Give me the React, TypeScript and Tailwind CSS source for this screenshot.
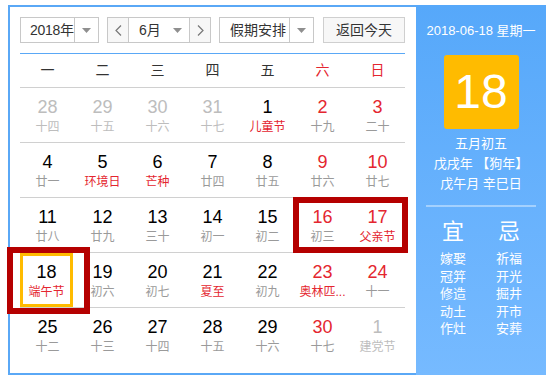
import React from "react";

type Cell = { d: string; l: string; n: "k" | "r" | "g"; lr?: "r" | "g" | "n" };

const rows: Cell[][] = [
  [
    { d: "28", l: "十四", n: "g", lr: "g" },
    { d: "29", l: "十五", n: "g", lr: "g" },
    { d: "30", l: "十六", n: "g", lr: "g" },
    { d: "31", l: "十七", n: "g", lr: "g" },
    { d: "1", l: "儿童节", n: "k", lr: "r" },
    { d: "2", l: "十九", n: "r" },
    { d: "3", l: "二十", n: "r" },
  ],
  [
    { d: "4", l: "廿一", n: "k" },
    { d: "5", l: "环境日", n: "k", lr: "r" },
    { d: "6", l: "芒种", n: "k", lr: "r" },
    { d: "7", l: "廿四", n: "k" },
    { d: "8", l: "廿五", n: "k" },
    { d: "9", l: "廿六", n: "r" },
    { d: "10", l: "廿七", n: "r" },
  ],
  [
    { d: "11", l: "廿八", n: "k" },
    { d: "12", l: "廿九", n: "k" },
    { d: "13", l: "三十", n: "k" },
    { d: "14", l: "初一", n: "k" },
    { d: "15", l: "初二", n: "k" },
    { d: "16", l: "初三", n: "r" },
    { d: "17", l: "父亲节", n: "r", lr: "r" },
  ],
  [
    { d: "18", l: "端午节", n: "k", lr: "r" },
    { d: "19", l: "初六", n: "k" },
    { d: "20", l: "初七", n: "k" },
    { d: "21", l: "夏至", n: "k", lr: "r" },
    { d: "22", l: "初九", n: "k" },
    { d: "23", l: "奥林匹...", n: "r", lr: "r" },
    { d: "24", l: "十一", n: "r" },
  ],
  [
    { d: "25", l: "十二", n: "k" },
    { d: "26", l: "十三", n: "k" },
    { d: "27", l: "十四", n: "k" },
    { d: "28", l: "十五", n: "k" },
    { d: "29", l: "十六", n: "k" },
    { d: "30", l: "十七", n: "r" },
    { d: "1", l: "建党节", n: "g", lr: "g" },
  ],
];

const numCls = { k: "text-[#000000]", r: "text-[#e4262f]", g: "text-[#bdbdbd]" };
const lunCls = { r: "text-[#e4262f]", g: "text-[#bdbdbd]", n: "text-[#9a9a9a]" };

const Tri = () => (
  <svg width="9" height="5" viewBox="0 0 9 5">
    <polygon points="0,0 9,0 4.5,5" fill="#8f8f8f" />
  </svg>
);

const Chev = ({ dir }: { dir: "l" | "r" }) => (
  <svg width="7" height="11" viewBox="0 0 7 11">
    <polyline
      points={dir === "l" ? "6,0.5 1,5.5 6,10.5" : "1,0.5 6,5.5 1,10.5"}
      fill="none"
      stroke="#777"
      strokeWidth="1.2"
    />
  </svg>
);

export default function App() {
  const font = { fontFamily: '"Liberation Sans", "Noto Sans CJK SC", sans-serif' };
  return (
    <div className="relative w-[550px] h-[378px] bg-white overflow-hidden" style={font}>
      <div className="ml-[8px] pt-[5px] flex">
        {/* left */}
        <div className="w-[408px] h-[370px] border-l-2 border-t-2 border-b-2 border-[#5aa8f6] pl-[10px] pr-[11px] pt-[10px]">
          {/* controls */}
          <div className="flex h-[26px] text-[14px] text-[#333]">
            <div className="w-[79px] h-[26px] border border-[#c8c8c8] flex">
              <div className="flex-1 min-w-0 pl-[9px] leading-[24px] whitespace-nowrap tracking-[-0.3px]">2018年</div>
              <div className="w-[24px] shrink-0 border-l border-[#c8c8c8] flex items-center justify-center">
                <Tri />
              </div>
            </div>
            <div className="ml-[8px] w-[104px] h-[26px] border border-[#c8c8c8] flex">
              <div className="w-[21px] bg-[#f7f7f7] border-r border-[#c8c8c8] flex items-center justify-center">
                <Chev dir="l" />
              </div>
              <div className="w-[60px] flex items-center pl-[10px]">
                <span className="leading-[24px] whitespace-nowrap">6月</span>
                <span className="ml-auto mr-[7px] flex">
                  <Tri />
                </span>
              </div>
              <div className="flex-1 bg-[#f7f7f7] border-l border-[#c8c8c8] flex items-center justify-center">
                <Chev dir="r" />
              </div>
            </div>
            <div className="ml-[8px] w-[95px] h-[26px] border border-[#c8c8c8] flex">
              <div className="flex-1 min-w-0 pl-[10px] leading-[24px] whitespace-nowrap">假期安排</div>
              <div className="w-[24px] shrink-0 border-l border-[#c8c8c8] flex items-center justify-center">
                <Tri />
              </div>
            </div>
            <div className="ml-[9px] w-[82px] h-[26px] border border-[#cfcfcf] bg-[#f7f7f7] flex items-center justify-center leading-[24px] whitespace-nowrap">
              返回今天
            </div>
          </div>
          <div className="mt-[10px] h-px bg-[#5aa8f6]" />
          {/* header */}
          <div className="grid grid-cols-7 h-[34px] border-b border-[#d0d0d0] text-[14px] items-center text-center">
            {["一", "二", "三", "四", "五"].map((w) => (
              <div key={w} className="text-[#333]">{w}</div>
            ))}
            <div className="text-[#e4262f]">六</div>
            <div className="text-[#e4262f]">日</div>
          </div>
          {rows.map((r, ri) => (
            <div
              key={ri}
              className={`grid grid-cols-7 h-[55px] ${ri < 4 ? "border-b border-[#d0d0d0]" : ""}`}
            >
              {r.map((c, ci) => {
                const sel = ri === 3 && ci === 0;
                return (
                  <div key={ci} className="flex">
                    <div
                      className={`flex flex-col items-center ${
                        sel
                          ? "w-[53px] h-[54px] border-[3px] border-[#ffbb00] pt-[6px]"
                          : "w-full pt-[9px]"
                      }`}
                    >
                      <div className={`text-[18px] leading-[20px] ${numCls[c.n]}`}>{c.d}</div>
                      <div
                        className={`mt-[2px] text-[12px] leading-[16px] whitespace-nowrap ${
                          lunCls[c.lr ?? "n"]
                        }`}
                      >
                        {c.l}
                      </div>
                    </div>
                  </div>
                );
              })}
            </div>
          ))}
        </div>
        {/* right */}
        <div className="w-[130px] h-[370px] bg-linear-to-b from-[#56a8fa] to-[#76baff] text-white flex flex-col items-center pt-[17px]">
          <div className="text-[13px] leading-[18px] whitespace-nowrap">2018-06-18 星期一</div>
          <div className="mt-[15px] w-[75px] h-[74px] rounded-[3px] bg-[#ffbb00] flex items-center justify-center text-[48px] leading-none">
            18
          </div>
          <div className="mt-[5px] text-[13px] leading-[20px] text-center">
            <div>五月初五</div>
            <div className="whitespace-nowrap">戊戌年 【狗年】</div>
            <div className="whitespace-nowrap">戊午月 辛巳日</div>
          </div>
          <div className="mt-[11px] w-[110px] h-[2px] bg-white/40" />
          <div className="mt-[12px] flex">
            <div className="w-[56px] flex flex-col items-center">
              <div className="text-[22px] leading-[26px]">宜</div>
              <div className="mt-[5px] text-[13px] leading-[17.5px] text-center">
                <div>嫁娶</div>
                <div>冠笄</div>
                <div>修造</div>
                <div>动土</div>
                <div>作灶</div>
              </div>
            </div>
            <div className="w-[56px] flex flex-col items-center">
              <div className="text-[22px] leading-[26px]">忌</div>
              <div className="mt-[5px] text-[13px] leading-[17.5px] text-center">
                <div>祈福</div>
                <div>开光</div>
                <div>掘井</div>
                <div>开市</div>
                <div>安葬</div>
              </div>
            </div>
          </div>
        </div>
      </div>
      {/* annotation boxes */}
      <div className="absolute left-[7px] top-[247px] w-[83px] h-[67px] border-[6px] border-[#b50000]" />
      <div className="absolute left-[293px] top-[197px] w-[115px] h-[56px] border-[6px] border-[#b50000]" />
    </div>
  );
}
